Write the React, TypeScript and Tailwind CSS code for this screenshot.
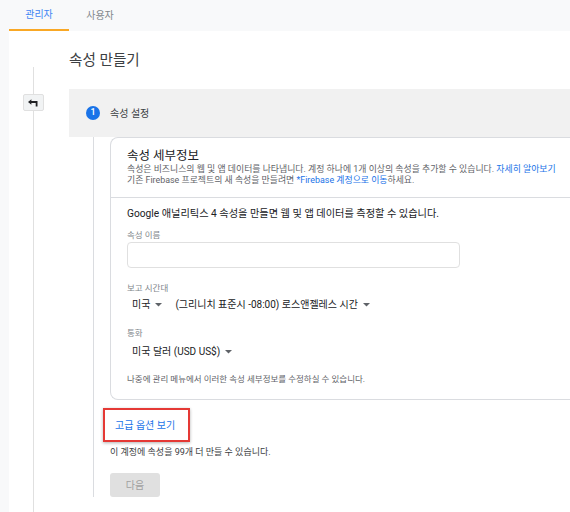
import type { ReactNode } from "react";

const font = "font-['Roboto','Noto_Sans_CJK_KR',sans-serif]";

function Caret() {
  return (
    <svg width="7" height="4" viewBox="0 0 7 4" className="ml-[5px] inline-block" aria-hidden="true">
      <path d="M0 0h7L3.5 3.5z" fill="#5f6368" />
    </svg>
  );
}

function Select({ children }: { children: ReactNode }) {
  return (
    <span className="inline-flex items-center text-[10px] leading-[14px] text-[#202124]">
      {children}
      <Caret />
    </span>
  );
}

function BackIcon() {
  return (
    <svg width="10" height="8" viewBox="0 0 10 8" aria-hidden="true">
      <path d="M2.5 3H8.6V7.5" fill="none" stroke="#202124" strokeWidth="1.8" />
      <path d="M0 3L3.4 0.2v5.6z" fill="#202124" />
    </svg>
  );
}

export default function App() {
  return (
    <div className={`h-[512px] w-full overflow-hidden bg-[#f8f9fa] ${font}`}>
      <nav className="flex h-[31px] pl-[9px] text-[10px]">
        <div className="flex w-[60px] items-center justify-center border-b-2 border-[#f9a825] text-[#4285f4]">관리자</div>
        <div className="flex w-[62px] items-center justify-center text-[#80868b]">사용자</div>
      </nav>

      <div className="ml-[9px] flex h-[481px] bg-white">
        <div className="flex w-[48px] shrink-0 flex-col items-center pt-[36px]">
          <div className="h-[27px] w-px bg-[#e0e0e0]" />
          <button
            type="button"
            className="flex h-[17px] w-[21px] items-center justify-center rounded-[2px] border border-[#e0e0e0] bg-[#f1f3f4]"
          >
            <BackIcon />
          </button>
          <div className="w-px flex-1 bg-[#e0e0e0]" />
        </div>

        <main className="min-w-0 flex-1 overflow-hidden pl-[12px]">
          <h1 className="mt-[17px] text-[14.6px] leading-[24px] text-[#3c4043]">속성 만들기</h1>

          <div className="mt-[17px] flex h-[48px] items-center bg-[#f1f1f1] pl-[17px]">
            <span className="flex h-[14px] w-[14px] items-center justify-center rounded-full bg-[#1a73e8] text-[9px] font-medium text-white">
              1
            </span>
            <span className="ml-[10px] text-[10px] text-[#3c4043]">속성 설정</span>
          </div>

          <div className="flex">
            <div className="w-[41px] shrink-0 pl-[24px]">
              <div className="h-[360px] w-px bg-[#dadce0]" />
            </div>

            <div className="w-[480px] shrink-0">
              <section className="rounded-l-[8px] border border-r-0 border-[#dadce0]">
                <div className="border-b border-[#dadce0] px-[16px] pb-[11px] pt-[9px]">
                  <h2 className="text-[12.5px] leading-[18px] text-[#202124]">속성 세부정보</h2>
                  <p className="mt-[-1px] text-[8.9px] leading-[11px] text-[#5f6368]">
                    속성은 비즈니스의 웹 및 앱 데이터를 나타냅니다. 계정 하나에 1개 이상의 속성을 추가할 수 있습니다.{" "}
                    <span className="text-[#1a73e8]">자세히 알아보기</span>
                    <br />
                    기존 Firebase 프로젝트의 새 속성을 만들려면{" "}
                    <span className="text-[#1a73e8]">*Firebase 계정으로 이동</span>하세요.
                  </p>
                </div>

                <div className="px-[16px] pb-[14px] pt-[9px]">
                  <p className="text-[10.2px] leading-[14px] text-[#202124]">
                    Google 애널리틱스 4 속성을 만들면 웹 및 앱 데이터를 측정할 수 있습니다.
                  </p>

                  <div className="mt-[8px] text-[8.5px] leading-[12px] text-[#80868b]">속성 이름</div>
                  <input
                    className="mt-[1px] block h-[26px] w-[333px] rounded-[4px] border border-[#e0e0e0] outline-none"
                    type="text"
                  />

                  <div className="mt-[14px] text-[8.5px] leading-[12px] text-[#80868b]">보고 시간대</div>
                  <div className="mt-[4px] flex items-center pl-[5px] text-[10px] leading-[14px]">
                    <Select>미국</Select>
                    <span className="ml-[13px] flex">
                      <Select>(그리니치 표준시 -08:00) 로스앤젤레스 시간</Select>
                    </span>
                  </div>

                  <div className="mt-[15px] text-[8.5px] leading-[12px] text-[#80868b]">통화</div>
                  <div className="mt-[6px] flex pl-[5px] text-[10px] leading-[14px]">
                    <Select>미국 달러 (USD US$)</Select>
                  </div>

                  <p className="mt-[14px] text-[8.5px] leading-[12px] text-[#5f6368]">
                    나중에 관리 메뉴에서 이러한 속성 세부정보를 수정하실 수 있습니다.
                  </p>
                </div>
              </section>

              <a
                href="#"
                className="ml-[-7px] mt-[8px] flex h-[34px] w-[87px] items-center border-2 border-[#e53935] pl-[10px] text-[10px] text-[#1a73e8] shadow-[0_1px_3px_rgba(0,0,0,0.3)]"
              >
                고급 옵션 보기
              </a>

              <p className="mt-[4px] text-[9px] leading-[12px] text-[#3c4043]">
                이 계정에 속성을 99개 더 만들 수 있습니다.
              </p>

              <button
                type="button"
                disabled
                className="mt-[15px] h-[24px] w-[50px] rounded-[3px] bg-[#e0e0e0] text-[10px] text-[#a0a0a0]"
              >
                다음
              </button>
            </div>
          </div>
        </main>
      </div>
    </div>
  );
}
